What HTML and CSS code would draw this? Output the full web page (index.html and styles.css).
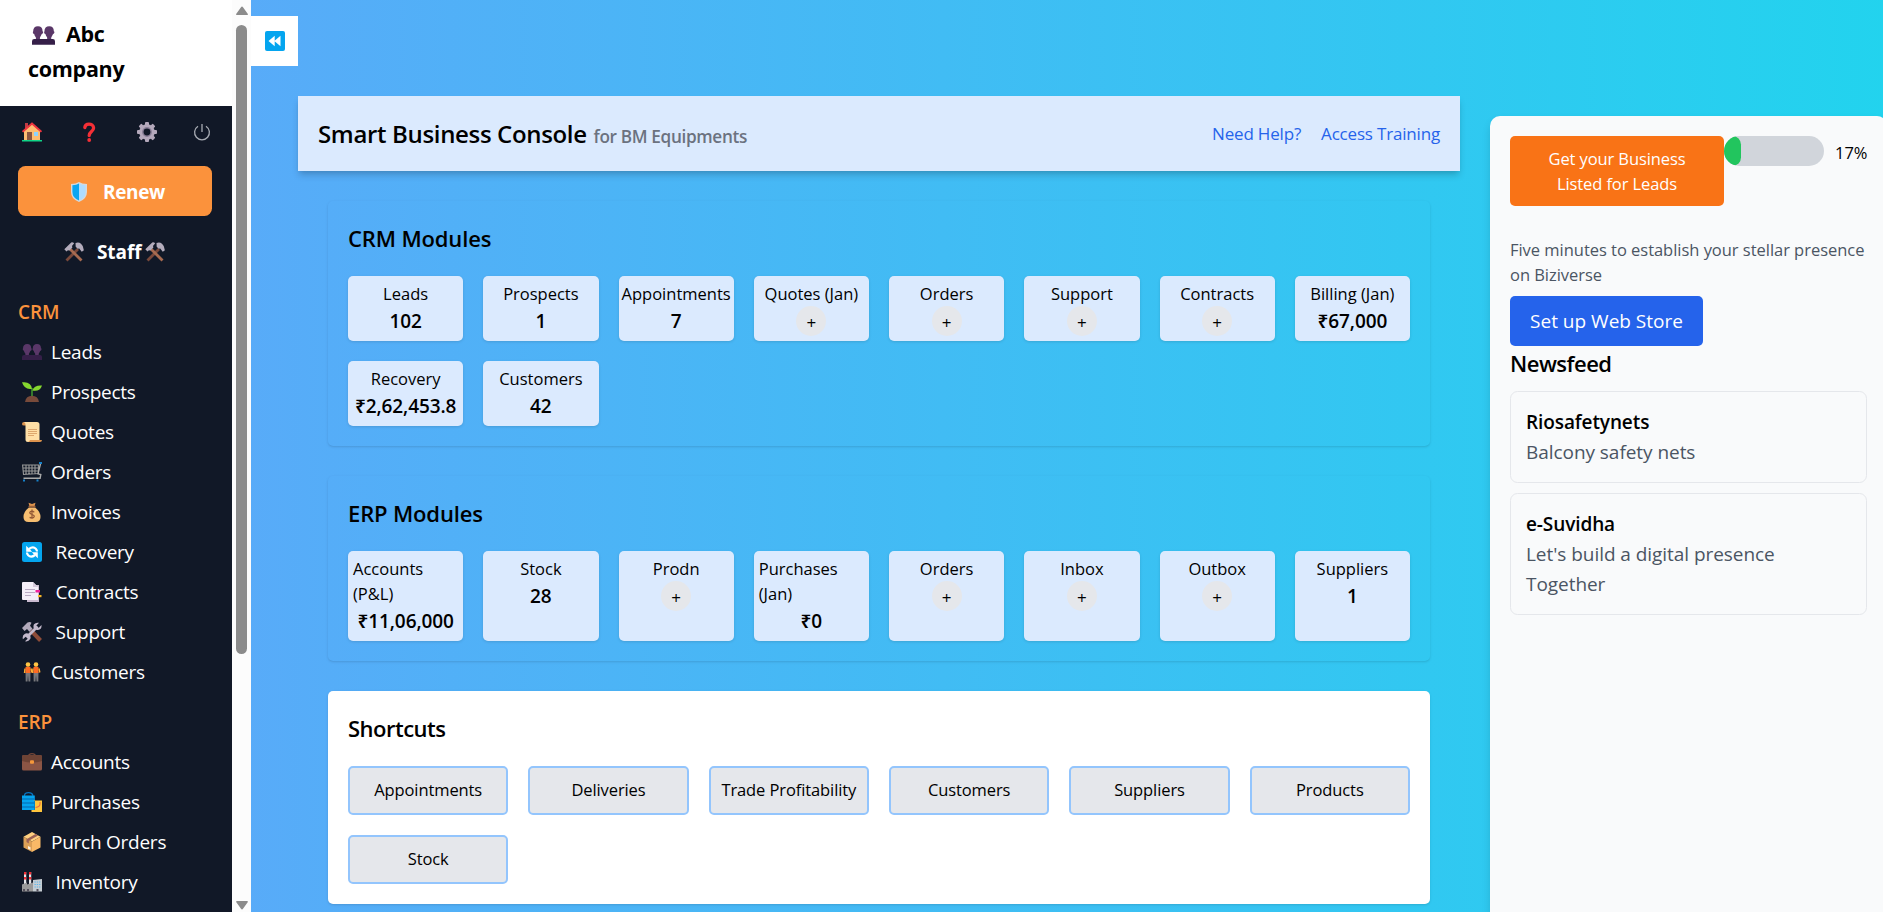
FILE: index.html
```html
<!DOCTYPE html>
<html lang="en">
<head>
<meta charset="utf-8">
<title>Smart Business Console</title>
<link rel="stylesheet" href="styles.css">
</head>
<body>
<svg class="defs" width="0" height="0">
  <symbol id="people" viewBox="0 0 20 20"><path fill="#5a3768" d="M1 6.5C1 3.500 2.500 2 5.200 2S9.200 3.500 9.200 6.200q1 .3.300 1.700-.4.900-1 .9Q7.500 11 7 11.500L6.800 14H3.500L3.300 11.500Q2.200 10.500 1.900 8.800 1 8.600.8 7.600.6 6.700 1 6.500zM10.800 6.500C10.800 3.500 12.300 2 15 2s4 1.500 4 4.200q1 .3.300 1.700-.4.900-1 .9-1 2.200-1.500 2.700l-.2 2.500h-3.300l-.2-2.500q-1.100-1-1.400-2.700-.9-.2-1.100-1.200-.2-.9.200-1.100z"/><path fill="#351f48" d="M0 18v-3q0-2 2-2h16q2 0 2 2v3z"/></symbol>
  <symbol id="house" viewBox="0 0 20 20"><path fill="#c13b43" d="M3 1h3v6H3z"/><path fill="#ffbd72" d="M2 9l8-7 8 7v9.500H2z"/><path fill="none" stroke="#f0353f" stroke-width="2" d="M.5 9.800L10 1.500l9.500 8.300"/><path fill="#8d5641" d="M5 10h5v8.500H5z"/><path fill="#8fd3ff" d="M12 10h4v4h-4z"/><path fill="#10d488" d="M0 18h20v1.500H0z"/></symbol>
  <symbol id="question" viewBox="0 0 20 20"><path fill="none" stroke="#f52f36" stroke-width="3.300" stroke-linecap="round" d="M5.800 5.500C6 3.300 7.800 2.100 10 2.100s4.600 1.500 4.600 4c0 3.400-4.400 3.500-4.400 7.400"/><circle cx="10.200" cy="18" r="1.900" fill="#f52f36"/></symbol>
  <symbol id="gear" viewBox="0 0 20 20"><g fill="#b4a8bb"><circle cx="10" cy="10" r="7.800"/><rect x="8" width="4" height="20" rx="1"/><rect y="8" width="20" height="4" rx="1"/><g transform="rotate(45 10 10)"><rect x="8" width="4" height="20" rx="1"/><rect y="8" width="20" height="4" rx="1"/></g></g><circle cx="10" cy="10" r="4.200" fill="#111827" stroke="#8b7f98" stroke-width="1.500"/></symbol>
  <symbol id="power" viewBox="0 0 20 20"><path fill="none" stroke="#a7abb3" stroke-width="1.300" d="M10 2v8M6 4.200a7.400 7.400 0 1 0 8 0"/></symbol>
  <symbol id="shield" viewBox="0 0 20 20"><path fill="#d5d9dd" d="M10 0q3 2 8 2v8q0 7-8 10-8-3-8-10V2q5 0 8-2z"/><path fill="#0aa5f1" d="M10 1.500V18.500Q3.400 16 3.400 10V3.200Q7.500 3 10 1.500z"/><path fill="#aedcff" d="M10 1.500V18.500Q16.600 16 16.600 10V3.200Q12.500 3 10 1.500z"/></symbol>
  <symbol id="hammers" viewBox="0 0 20 20"><path stroke="#79483b" stroke-width="2.800" d="M14 7L2.500 18.500"/><path stroke="#a66a50" stroke-width="2.800" d="M6 7l11.500 11.500"/><path fill="#b4acbc" d="M.3 7.200L7.200.5q1.500-.5 3 .8L8 4l.4 1.600-3 3-1.500-.3-1.400 1.200z"/><path fill="#b4acbc" d="M11.500 1q3-1.500 5.500.7 3 2.500 2.700 6.800l-2 1.200-2.500-3.200-1.500.3-2-2z"/></symbol>
  <symbol id="seedling" viewBox="0 0 20 20"><path fill="#784a3a" d="M3 20q1-6.300 7-6.300t7 6.300z"/><path fill="none" stroke="#47ad30" stroke-width="1.300" d="M10 14V6"/><path fill="#86d72f" d="M0 .3q9-1.200 10 6.500Q2.500 8.200 0 .3zM10.400 8.500Q12 3 20 3.500q-1.800 6.300-9.600 5z"/></symbol>
  <symbol id="scroll" viewBox="0 0 20 20"><path fill="#dd934d" d="M0 2Q0 0 2 0h3v3.500H2Q0 3.500 0 2z"/><path fill="#ffdfa6" d="M2 0h13q2.500 0 2.500 2.500V18q0 2-2 2H6q-2.500 0-2.500-2.500V2.500Q3.500.8 2 0z"/><path stroke="#d9a066" stroke-width=".9" d="M6 7.500h9M6 9.500h9M6 11.500h9M6 13.500h6"/><path fill="#dd934d" d="M8 18h12q0 2-2 2H6q1.500-.3 2-2z"/></symbol>
  <symbol id="cart" viewBox="0 0 20 20"><path fill="none" stroke="#999" stroke-width="1.100" d="M.6 3h15.800v8.600L1.500 12.500zM1 6h15.500M1 9h15.500M4 3v9M7 3v9M10 3v9M13 3v9"/><path fill="none" stroke="#aaa" stroke-width="1.400" d="M18.600 1.500L16 11.800l2.800.8-.7 3.600H1.500"/><path stroke="#1681c9" stroke-width="2" d="M17 .9h3M1 18.500h2M14.500 18.500h2"/></symbol>
  <symbol id="bag" viewBox="0 0 20 20"><path fill="#dd934d" d="M6.500.8L10 2l3.500-1.200L12.500 4.500h-5z"/><path fill="#f6bd70" d="M7 5.500h6q5.500 4 5.500 9.500 0 5-5 5h-7q-5 0-5-5 0-5.500 5.500-9.500z"/><path fill="#9c6139" d="M6.500 3.800h7v1.700h-7z"/><path fill="none" stroke="#925735" stroke-width="1.200" d="M12.300 10.200Q10 8.500 8.300 9.800T10 12.500t1.800 2.700-4.200.2M10 7.600v9.200"/></symbol>
  <symbol id="refresh" viewBox="0 0 20 20"><rect width="20" height="20" rx="2.500" fill="#04a5ef"/><path fill="none" stroke="#fff" stroke-width="2.200" d="M7 7q4-3 6.800-.3 1.200 1.300 1.200 2.800M13 13q-4 3-6.800.3Q5 12 5 10.500"/><path fill="#fff" d="M4.200 3.800v6h6zM15.800 16.200v-6h-6z"/></symbol>
  <symbol id="docs" viewBox="0 0 20 20"><path fill="#c9bacf" d="M5 3h12v17H5z"/><path fill="#f4eef8" d="M0 1q0-1 1-1h10l5 5v13H1q-1 0-1-1z"/><path fill="#d5c9dc" d="M11 0v5h5z"/><path stroke="#b9a9c3" d="M3 7.500h10M3 10.500h10M3 13.500h6"/><path fill="#ee219a" d="M13.500 8H18v2.500h-4.500z"/><path fill="#f6b526" d="M16 13h3.500v2.200H16z"/></symbol>
  <symbol id="tools" viewBox="0 0 20 20"><path stroke="#8e4c38" stroke-width="4" d="M9 8.500l9.500 10"/><path fill="#b2a9ba" d="M0 6L5.500.5q2.500-1 4 .2L8 3.700l2.500 3-3 3L5 7 2.500 9z"/><path fill="none" stroke="#c3b9cb" stroke-width="2.800" d="M5.500 14.500l10-10"/><path fill="#c3b9cb" d="M19.500 3l-3 3-2.300-2.300L17 .8q-3.300-.7-5 1.500-1 1.800-.2 4 1.500 2.200 4.200 1.700 4-.8 3.500-5zM3 19.300l2.700-2.600-2-2L.9 17.300q-1-4 2.100-5.600 2.500-1 4.400 1t.8 4.400Q6.500 20 3 19.300z"/></symbol>
  <symbol id="pair" viewBox="0 0 20 20"><g id="person"><path fill="#77777b" d="M3.500 10h5l-.2 9.500H6.500L6 13l-.5 6.500H3.700z"/><path fill="#ff6a22" d="M3.500 5q2.500-1 5 0v6h-5z"/><path fill="none" stroke="#ffae35" stroke-width="1.400" d="M3 6.500L2.500 11M9 6.500l.8 4"/><circle cx="6" cy="2.500" r="2.300" fill="#ffc444"/></g><use href="#person" x="8"/></symbol>
  <symbol id="briefcase" viewBox="0 0 20 20"><path fill="none" stroke="#754738" stroke-width="1.200" d="M6.500 4q.5-2.400 3.500-2.400T13.500 4"/><rect y="3" width="20" height="15.500" rx="1.500" fill="#8b5545"/><path fill="#6e4335" d="M0 4.500Q0 3 1.500 3h17Q20 3 20 4.500V9q-10 3-20 0z"/><rect x="8" y="8.300" width="4" height="3.400" rx="1" fill="#f5983b"/></symbol>
  <symbol id="shopping" viewBox="0 0 20 20"><path fill="none" stroke="#0875c2" stroke-width="1.200" d="M2.500 5V3Q3 .6 6.500.6T10.800 3v2"/><path fill="#05a3ee" d="M0 3.500h12.800V18H0z"/><path stroke="#057cc3" stroke-width="1.300" d="M0 7h12.800M0 11h12.800M0 15h12.800"/><path fill="#ffc53d" d="M11 8.500h9V20H9.500v-2H13V9z"/><path fill="none" stroke="#ed6b3b" stroke-width="1.100" d="M18 10v2q0 3-4.500 3.500"/></symbol>
  <symbol id="package" viewBox="0 0 20 20"><path fill="#ffcf80" d="M10 0l8.500 4.700L10 9.400 1.500 4.700z"/><path fill="#dda056" d="M1.500 4.700L10 9.400V20l-8.500-4.500z"/><path fill="#f9b967" d="M18.500 4.700L10 9.400V20l8.500-4.500z"/><path fill="#9a6054" d="M13.500 2l2.600 1.400-9.300 5.300v2.800L4.500 10V7.200z"/><path fill="#fff0dc" d="M6 14l2.500 1.300V18L6 16.700z"/></symbol>
  <symbol id="factory" viewBox="0 0 20 20"><path fill="#e5e5e9" d="M2 0h2.200v12H2zM7 0h2.200v12H7z"/><path fill="#f22f35" d="M2 0h2.200v2.500H2zM2 5h2.200v2.500H2zM7 0h2.200v2.500H7zM7 5h2.200v2.500H7z"/><path fill="#999" d="M0 12.500l5-2v2l6-2V19.500H0z"/><path fill="#c5ccd2" d="M11 8l9-1v12.500h-9z"/><path stroke="#58b6ed" stroke-width="1" stroke-dasharray="1.300 1" d="M12.500 10h6.500M12.500 12.500h6.500M12.500 15h6.500"/><path fill="#55505c" d="M1 17h2v2.500H1zM5 17h2v2.500H5zM14.500 17h2v2.500h-2z"/></symbol>
  <symbol id="rewind" viewBox="0 0 20 20"><rect width="20" height="20" rx="2" fill="#04a5ef"/><path fill="#fff" d="M9.700 4.800v10.400L3.500 10zM15.500 4.800v10.400L9.300 10z"/></symbol>
</svg>
<div class="app">
  <aside class="sidebar">
    <div class="brand"><svg class="brand-icon"><use href="#people"/></svg>Abc company</div>
    <nav class="tools">
      <svg class="icon"><use href="#house"/></svg>
      <svg class="icon"><use href="#question"/></svg>
      <svg class="icon gear"><use href="#gear"/></svg>
      <svg class="icon"><use href="#power"/></svg>
    </nav>
    <button class="renew"><svg class="icon"><use href="#shield"/></svg>Renew</button>
    <div class="staff"><svg class="icon"><use href="#hammers"/></svg><span>Staff</span><svg class="icon"><use href="#hammers"/></svg></div>
    <h2 class="nav-title">CRM</h2>
    <ul class="nav-list">
      <li><svg class="icon"><use href="#people"/></svg>Leads</li>
      <li><svg class="icon"><use href="#seedling"/></svg>Prospects</li>
      <li><svg class="icon"><use href="#scroll"/></svg>Quotes</li>
      <li><svg class="icon"><use href="#cart"/></svg>Orders</li>
      <li><svg class="icon"><use href="#bag"/></svg>Invoices</li>
      <li class="wide"><svg class="icon"><use href="#refresh"/></svg>Recovery</li>
      <li class="wide"><svg class="icon"><use href="#docs"/></svg>Contracts</li>
      <li class="wide"><svg class="icon"><use href="#tools"/></svg>Support</li>
      <li><svg class="icon"><use href="#pair"/></svg>Customers</li>
    </ul>
    <h2 class="nav-title">ERP</h2>
    <ul class="nav-list">
      <li><svg class="icon"><use href="#briefcase"/></svg>Accounts</li>
      <li><svg class="icon"><use href="#shopping"/></svg>Purchases</li>
      <li><svg class="icon"><use href="#package"/></svg>Purch Orders</li>
      <li class="wide"><svg class="icon"><use href="#factory"/></svg>Inventory</li>
    </ul>
  </aside>
  <div class="scrollbar">
    <svg class="arrow" viewBox="0 0 12 10"><path d="M6 .5q.5 0 1 .8l4.700 6.500q.6 1.200-.7 1.200H1q-1.300 0-.7-1.200L5 1.300q.5-.8 1-.8z"/></svg>
    <div class="thumb"></div>
    <svg class="arrow" viewBox="0 0 12 10"><path d="M6 9.500q-.5 0-1-.8L.3 2.200Q-.3 1 1 1h10q1.300 0 .7 1.200L7 8.700q-.5.800-1 .8z"/></svg>
  </div>
  <button class="toggle"><svg class="icon"><use href="#rewind"/></svg></button>
  <main class="main">
    <header class="header">
      <h1>Smart Business Console <span>for BM Equipments</span></h1>
      <div class="links"><a>Need Help?</a><a>Access Training</a></div>
    </header>
    <section class="panel">
      <h2>CRM Modules</h2>
      <div class="modules">
        <div class="card"><span>Leads</span><b>102</b></div>
        <div class="card"><span>Prospects</span><b>1</b></div>
        <div class="card"><span>Appointments</span><b>7</b></div>
        <div class="card"><span>Quotes (Jan)</span><i>+</i></div>
        <div class="card"><span>Orders</span><i>+</i></div>
        <div class="card"><span>Support</span><i>+</i></div>
        <div class="card"><span>Contracts</span><i>+</i></div>
        <div class="card"><span>Billing (Jan)</span><b>₹67,000</b></div>
        <div class="card"><span>Recovery</span><b>₹2,62,453.8</b></div>
        <div class="card"><span>Customers</span><b>42</b></div>
      </div>
    </section>
    <section class="panel">
      <h2>ERP Modules</h2>
      <div class="modules">
        <div class="card"><span>Accounts (P&amp;L)</span><b>₹11,06,000</b></div>
        <div class="card"><span>Stock</span><b>28</b></div>
        <div class="card"><span>Prodn</span><i>+</i></div>
        <div class="card"><span>Purchases (Jan)</span><b>₹0</b></div>
        <div class="card"><span>Orders</span><i>+</i></div>
        <div class="card"><span>Inbox</span><i>+</i></div>
        <div class="card"><span>Outbox</span><i>+</i></div>
        <div class="card"><span>Suppliers</span><b>1</b></div>
      </div>
    </section>
    <section class="panel white">
      <h2>Shortcuts</h2>
      <div class="shortcuts">
        <button>Appointments</button><button>Deliveries</button><button>Trade Profitability</button><button>Customers</button><button>Suppliers</button><button>Products</button><button>Stock</button>
      </div>
    </section>
  </main>
  <aside class="side">
    <div class="listing">
      <button class="orange">Get your Business Listed for Leads</button>
      <div class="progress"><div class="bar" style="width:17%"></div></div>
      <span class="percent">17%</span>
    </div>
    <p class="pitch">Five minutes to establish your stellar presence<br>on Biziverse</p>
    <button class="store">Set up Web Store</button>
    <h2>Newsfeed</h2>
    <article class="news"><h3>Riosafetynets</h3><p>Balcony safety nets</p></article>
    <article class="news"><h3>e-Suvidha</h3><p>Let's build a digital presence<br>Together</p></article>
  </aside>
</div>
</body>
</html>
```
FILE: styles.css
```css
* { box-sizing: border-box; margin: 0; padding: 0; }
html, body { height: 100%; overflow: hidden; }
body { font-family: "Open Sans", "Noto Sans", sans-serif; font-size: 19px; line-height: 30px; color: #000; }
button { font: inherit; border: 0; }
h1, h2, h3 { font-weight: 600; }
ul { list-style: none; }
.defs { display: block; }
.icon { width: 20px; height: 20px; flex: none; }

.app { display: flex; height: 912px; width: 1887px; background: linear-gradient(to right, #60a5fa, #22d3ee); }

.sidebar { width: 232px; height: 912px; overflow: hidden; background: #111827; color: #fff; flex: none; }
.brand { height: 106px; padding: 16px 60px 0 28px; background: #fff; color: #000; font-size: 21.500px; font-weight: 700; line-height: 35px; letter-spacing: -.3px; }
.brand-icon { width: 23px; height: 23px; margin: 0 11px 0 4px; vertical-align: -5px; }
.tools { display: flex; justify-content: space-between; padding: 16px 20px 0 22px; height: 60px; }
.gear { margin: 0 -2px 0 2px; }
.renew { display: flex; align-items: center; justify-content: center; gap: 14px; width: 194px; height: 50px; margin-left: 18px; padding: 1px 0 0 4px; border-radius: 7.500px; background: #fb923c; color: #fff; font-weight: 700; letter-spacing: -.35px; }
.staff { display: flex; align-items: center; height: 72px; margin-bottom: 9px; padding-left: 64px; font-weight: 700; letter-spacing: -.1px; }
.staff span { margin: 0 4px 0 13px; }
.nav-title { padding-left: 18px; color: #fb923c; font-size: 19px; line-height: 30px; letter-spacing: -.1px; margin-bottom: 5px; }
.nav-list { margin-bottom: 15px; }
.nav-list li { display: flex; align-items: center; gap: 9px; height: 40px; padding-left: 22px; letter-spacing: -.25px; }
.nav-list .wide { gap: 13.500px; }

.scrollbar { display: flex; flex-direction: column; align-items: center; width: 19px; padding: 6px 0 2px; background: #fcfcfc; flex: none; }
.arrow { width: 12px; height: 10px; fill: #8b8b8b; }
.thumb { width: 11px; height: 629px; margin: 9px 0 auto; border-radius: 6px; background: #8b8b8b; }

.toggle { display: grid; place-items: center; width: 47px; height: 50px; margin-top: 16px; background: #fff; flex: none; }

.main { width: 1162px; padding-top: 96px; flex: none; }
.header { display: flex; align-items: center; justify-content: space-between; height: 75px; padding: 0 20px; background: #dbeafe; box-shadow: 0 5px 7px -1px rgba(0,0,0,.18), 0 2px 4px -2px rgba(0,0,0,.1); }
.header h1 { padding-top: 3px; font-size: 24px; letter-spacing: -.34px; }
.header h1 span { color: #6b7280; font-size: 17.200px; letter-spacing: -.35px; margin-left: 1px; }
.links { display: flex; gap: 20px; font-size: 17px; color: #2563eb; letter-spacing: -.18px; }
.panel { margin: 30px 30px 0; padding: 20px; border-radius: 5px; box-shadow: 0 1px 3px rgba(0,0,0,.1), 0 1px 2px -1px rgba(0,0,0,.1); }
.panel:first-of-type { margin-top: 29.500px; }
.white { background: #fff; }
.panel h2, .side h2 { font-size: 22px; line-height: 35px; letter-spacing: -.5px; }
.panel h2 { margin-bottom: 20px; letter-spacing: -.15px; }
.panel.white h2 { letter-spacing: -.5px; }
.modules { display: grid; grid-template-columns: repeat(8, 1fr); gap: 20px; }
.card { display: flex; flex-direction: column; align-items: center; min-width: 0; padding: 5px; border-radius: 5px; background: #dbeafe; box-shadow: 0 1px 3px rgba(0,0,0,.12); }
.card span { font-size: 16.500px; line-height: 25px; letter-spacing: 0; }
.card b { font-weight: 600; letter-spacing: -.1px; }
.card i { width: 30px; height: 30px; border-radius: 50%; background: #e5e7eb; font-style: normal; font-size: 17px; line-height: 34px; text-align: center; }
.shortcuts { display: grid; grid-template-columns: repeat(6, 1fr); gap: 20px; }
.shortcuts button { height: 49px; border: 2px solid #93c5fd; border-radius: 5px; background: #e5e7eb; font-size: 16.500px; letter-spacing: -.1px; white-space: nowrap; }

.side { width: 397px; height: 796px; margin: 116px 0 0 30px; padding: 20px; border-radius: 10px 10px 0 0; background: #f9fafb; box-shadow: 0 5px 8px rgba(0,0,0,.12); flex: none; }
.listing { display: flex; height: 70px; font-size: 16.500px; line-height: 25px; }
.orange { width: 214px; padding: 10px 30px; border-radius: 5px; background: #f97316; color: #fff; flex: none; letter-spacing: -.1px; }
.progress { width: 100px; height: 30px; border-radius: 15px; background: #d1d5db; overflow: hidden; flex: none; }
.bar { height: 100%; border-radius: 15px; background: #22c55e; }
.percent { margin: 4px 0 0 11px; }
.pitch { margin-top: 31px; color: #4b5563; font-size: 16.500px; line-height: 25px; letter-spacing: -.03px; white-space: nowrap; }
.store { display: block; width: 193px; height: 50px; margin-top: 9px; border-radius: 5px; background: #2563eb; color: #fff; }
.news { margin-top: 10px; padding: 15px; border: 1px solid #e5e7eb; border-radius: 7.500px; }
.news h3 { font-size: 19px; letter-spacing: -.1px; }
.news p { color: #4b5563; letter-spacing: -.05px; }
```
